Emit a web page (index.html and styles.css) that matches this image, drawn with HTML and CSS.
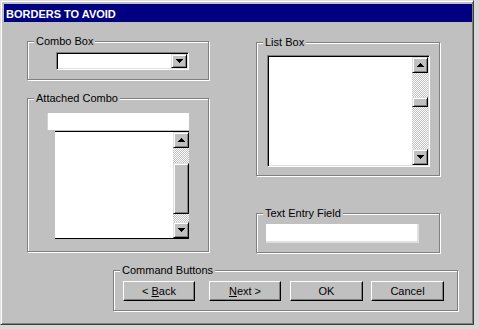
FILE: index.html
```html
<!DOCTYPE html>
<html lang="en">
  <head>
    <meta charset="UTF-8" />
    <title>Borders to avoid</title>
    <link rel="stylesheet" href="styles.css">
  </head>
  <body>
    <div class="window">
      <div class="title-bar">BORDERS TO AVOID</div>

      <div class="dialog">
        <div class="columns">
          <!-- left column -->
          <div class="col col-left">
            <fieldset class="group group-combo">
              <legend>Combo Box</legend>
              <div class="combo">
                <span class="combo-text"></span>
                <span class="arrow-btn combo-btn">
                  <svg width="7" height="4" viewBox="0 0 7 4"><path d="M0 0h7v1H6v1H5v1H4v1H3V3H2V2H1V1H0z"/></svg>
                </span>
              </div>
            </fieldset>

            <fieldset class="group group-attached">
              <legend>Attached Combo</legend>
              <div class="attached-edit"></div>
              <div class="attached-list">
                <div class="list-items"></div>
                <div class="scrollbar">
                  <span class="arrow-btn sb-btn">
                    <svg width="7" height="4" viewBox="0 0 7 4"><path d="M3 0h1v1h1v1h1v1h1v1H0V3h1V2h1V1h1z"/></svg>
                  </span>
                  <span class="sb-track attached-track">
                    <span class="sb-thumb attached-thumb"></span>
                  </span>
                  <span class="arrow-btn sb-btn">
                    <svg width="7" height="4" viewBox="0 0 7 4"><path d="M0 0h7v1H6v1H5v1H4v1H3V3H2V2H1V1H0z"/></svg>
                  </span>
                </div>
              </div>
            </fieldset>
          </div>

          <!-- right column -->
          <div class="col col-right">
            <fieldset class="group group-list">
              <legend>List Box</legend>
              <div class="listbox">
                <div class="list-items"></div>
                <div class="scrollbar">
                  <span class="arrow-btn sb-btn">
                    <svg width="7" height="4" viewBox="0 0 7 4"><path d="M3 0h1v1h1v1h1v1h1v1H0V3h1V2h1V1h1z"/></svg>
                  </span>
                  <span class="sb-track list-track">
                    <span class="sb-thumb list-thumb"></span>
                  </span>
                  <span class="arrow-btn sb-btn">
                    <svg width="7" height="4" viewBox="0 0 7 4"><path d="M0 0h7v1H6v1H5v1H4v1H3V3H2V2H1V1H0z"/></svg>
                  </span>
                </div>
              </div>
            </fieldset>

            <fieldset class="group group-text">
              <legend>Text Entry Field</legend>
              <div class="text-entry"></div>
            </fieldset>
          </div>
        </div>

        <fieldset class="group group-commands">
          <legend>Command Buttons</legend>
          <div class="cmd-row">
            <button type="button" class="cmd-btn cmd-back">&lt; <u>B</u>ack</button>
            <button type="button" class="cmd-btn cmd-next"><u>N</u>ext &gt;</button>
            <button type="button" class="cmd-btn cmd-ok">OK</button>
            <button type="button" class="cmd-btn cmd-cancel">Cancel</button>
          </div>
        </fieldset>
      </div>
    </div>
  </body>
</html>
```

FILE: styles.css
```css
* {
  box-sizing: border-box;
}

body {
  margin: 0;
  background: #d8d8d8;
  font-family: "Liberation Sans", Arial, sans-serif;
  font-size: 11px;
  color: #000;
}

.window {
  width: 474px;
  height: 325px;
  padding: 3px 1px 3px 3px;
  background: #c0c0c0;
  border: 1px solid;
  border-color: #dfdfdf #404040 #404040 #dfdfdf;
  box-shadow: inset 1px 1px #fff, inset -1px -1px #808080;
}

.title-bar {
  height: 18px;
  padding: 1px 0 0 2px;
  line-height: 18px;
  overflow: hidden;
  background: #000080;
  color: #fff;
  font-weight: bold;
}

/* group boxes */
.group {
  margin: 0;
  padding: 0;
  min-width: 0;
  border: 1px solid #808080;
  box-shadow: 1px 1px #fff, inset 1px 1px #fff;
}

.group legend {
  margin-left: 6px;
  padding: 0 2px;
  line-height: 13px;
  background: #c0c0c0;
}

.columns {
  display: flex;
  align-items: flex-start;
}

.col-left {
  margin-left: 23px;
}

.col-right {
  margin-left: 47px;
}

.group-combo {
  width: 182px;
  height: 45px;
  margin-top: 13px;
}

.group-attached {
  width: 182px;
  height: 160px;
  margin-top: 12px;
}

.group-list {
  width: 184px;
  height: 140px;
  margin-top: 14px;
}

.group-text {
  width: 184px;
  height: 46px;
  margin-top: 31px;
}

.group-commands {
  width: 345px;
  height: 47px;
  margin: 11px 0 0 109px;
}

/* raised little buttons with arrows */
.arrow-btn {
  display: flex;
  align-items: center;
  justify-content: center;
  background: #c0c0c0;
  border: 1px solid;
  border-color: #dfdfdf #000 #000 #dfdfdf;
  box-shadow: inset 1px 1px #fff, inset -1px -1px #808080;
}

.arrow-btn svg {
  display: block;
  fill: #000;
}

/* combo box */
.combo {
  display: flex;
  width: 133px;
  height: 18px;
  margin: 4px 0 0 28px;
  background: #fff;
  border: 1px solid;
  border-color: #808080 #fff #fff #808080;
  box-shadow: inset 1px 1px #000, inset -1px -1px #dfdfdf;
  padding: 1px;
}

.combo-text {
  flex: 1;
}

.combo-btn {
  width: 16px;
  height: 14px;
}

/* attached combo */
.attached-edit {
  width: 142px;
  height: 17px;
  margin: 8px 0 0 19px;
  background: #fff;
  border-left: 1px solid #d0d0d0;
}

.attached-list {
  display: flex;
  width: 134px;
  height: 108px;
  margin: 1px 0 0 27px;
  background: #fff;
  border-top: 1px solid #000;
  border-bottom: 1px solid #000;
}

.list-items {
  flex: 1;
}

.scrollbar {
  display: flex;
  flex-direction: column;
  width: 16px;
}

.sb-btn {
  height: 16px;
  flex: none;
}

.sb-track {
  display: flex;
  flex-direction: column;
  flex: 1;
  background: repeating-conic-gradient(#fff 0 25%, #c0c0c0 0 50%) 0 0 / 2px 2px;
}

.sb-thumb {
  display: block;
  background: #c0c0c0;
  border: 1px solid;
  border-color: #dfdfdf #000 #000 #dfdfdf;
  box-shadow: inset 1px 1px #fff, inset -1px -1px #808080;
}

.attached-thumb {
  height: 51px;
  margin-top: 15px;
}

/* list box */
.listbox {
  display: flex;
  width: 163px;
  height: 112px;
  margin: 6px 0 0 10px;
  background: #fff;
  border: 1px solid;
  border-color: #808080 #fff #fff #808080;
  box-shadow: inset 1px 1px #000, inset -1px -1px #dfdfdf;
  padding: 1px;
}

.list-thumb {
  height: 10px;
  margin-top: 24px;
}

/* text entry */
.text-entry {
  width: 153px;
  height: 19px;
  margin: 4px 0 0 9px;
  background: #fff;
  border-right: 2px solid #e0e0e0;
  border-bottom: 2px solid #e0e0e0;
}

/* command buttons */
.cmd-row {
  display: flex;
  margin-top: 4px;
}

.cmd-btn {
  width: 72px;
  height: 20px;
  padding: 0;
  font: inherit;
  line-height: 18px;
  text-align: center;
  color: #000;
  background: #c0c0c0;
  border: 1px solid;
  border-color: #fff #000 #000 #fff;
  box-shadow: inset -1px -1px #808080;
}

.cmd-back {
  margin-left: 9px;
}

.cmd-next {
  margin-left: 14px;
}

.cmd-ok {
  width: 73px;
  margin-left: 9px;
}

.cmd-cancel {
  width: 73px;
  margin-left: 8px;
}
```
